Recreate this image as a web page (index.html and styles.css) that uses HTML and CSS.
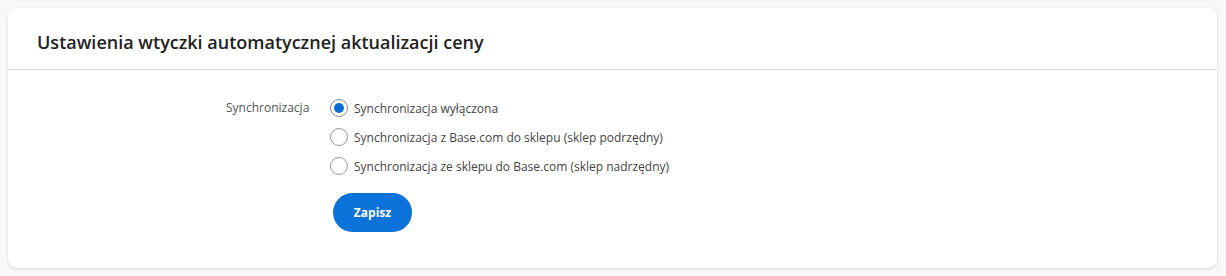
FILE: index.html
```html
<!DOCTYPE html>
<html lang="pl">
<head>
<meta charset="utf-8">
<link rel="stylesheet" href="styles.css">
</head>
<body>
<div class="card">
  <div class="card-header">
    <h2 class="card-title">Ustawienia wtyczki automatycznej aktualizacji ceny</h2>
  </div>
  <div class="card-body">
    <div class="form-row">
      <div class="form-label">Synchronizacja</div>
      <div class="form-control">
        <label class="radio"><span class="radio-dot checked"></span><span>Synchronizacja wyłączona</span></label>
        <label class="radio"><span class="radio-dot"></span><span>Synchronizacja z Base.com do sklepu (sklep podrzędny)</span></label>
        <label class="radio"><span class="radio-dot"></span><span>Synchronizacja ze sklepu do Base.com (sklep nadrzędny)</span></label>
        <button class="btn-primary">Zapisz</button>
      </div>
    </div>
  </div>
</div>
</body>
</html>
```
FILE: styles.css
```css
html, body { margin: 0; padding: 0; }
body {
  background: #f8f8f8;
  font-family: "Open Sans", "Noto Sans", sans-serif;
  padding: 8px 9px 8px 8px;
}
.card {
  background: #fff;
  border-radius: 9px;
  box-shadow: 0 1px 3px rgba(0,0,0,0.14);
  height: 260px;
  box-sizing: border-box;
}
.card-header {
  height: 62px;
  border-bottom: 1px solid #d9d9d9;
  display: flex;
  align-items: center;
  padding-left: 29px;
  box-sizing: border-box;
}
.card-title {
  margin: 0;
  font-size: 18px;
  font-weight: 600;
  color: #222;
  padding-top: 6px;
}
.card-body {
  padding-top: 28px;
}
.form-row {
  display: flex;
}
.form-label {
  width: 104px;
  margin-left: 218px;
  font-size: 12px;
  color: #555;
  line-height: 20px;
}
.form-control {
  display: flex;
  flex-direction: column;
  align-items: flex-start;
}
.radio {
  display: flex;
  align-items: center;
  height: 20px;
  margin-bottom: 9px;
  font-size: 12px;
  color: #444;
  cursor: pointer;
}
.radio-dot {
  width: 18px;
  height: 18px;
  border: 1px solid #999;
  border-radius: 50%;
  box-sizing: border-box;
  margin-right: 6px;
  position: relative;
}
.radio-dot.checked {
  border-color: #888;
}
.radio-dot.checked::after {
  content: "";
  position: absolute;
  left: 3px; top: 3px;
  width: 10px; height: 10px;
  border-radius: 50%;
  background: #0a6ed1;
}
.btn-primary {
  margin-top: 8px;
  margin-left: 3px;
  width: 79px;
  height: 39px;
  border: none;
  border-radius: 20px;
  background: #0a72d8;
  color: #fff;
  font-family: "Open Sans", sans-serif;
  font-weight: 700;
  font-size: 12px;
}
```
